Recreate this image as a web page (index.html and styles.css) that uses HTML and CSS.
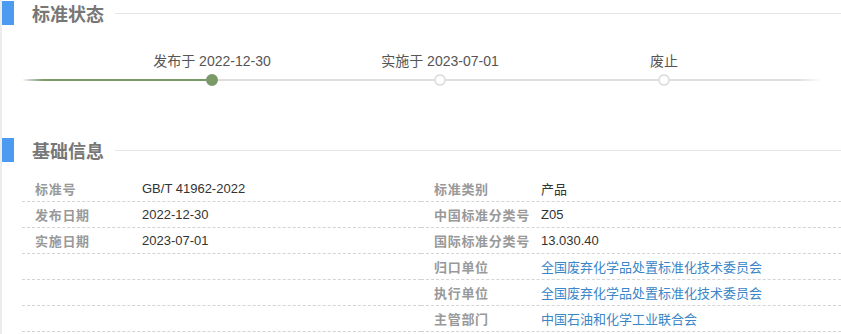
FILE: index.html
```html
<!DOCTYPE html>
<html lang="zh-CN">
<head>
<meta charset="utf-8">
<title>标准信息</title>
<link rel="stylesheet" href="styles.css">
</head>
<body>
<div class="page">
  <div class="section-title">
    <span class="bar"></span>
    <h2 class="title-text">标准状态</h2>
    <span class="title-line"></span>
  </div>

  <div class="timeline">
    <div class="track"></div>
    <div class="track-done"></div>
    <div class="steps">
      <div class="step done s1">
        <div class="step-label">发布于 2022-12-30</div>
        <div class="dot"></div>
      </div>
      <div class="step s2">
        <div class="step-label">实施于 2023-07-01</div>
        <div class="dot"></div>
      </div>
      <div class="step s3">
        <div class="step-label">废止</div>
        <div class="dot"></div>
      </div>
    </div>
  </div>

  <div class="section-title second">
    <span class="bar"></span>
    <h2 class="title-text">基础信息</h2>
    <span class="title-line"></span>
  </div>

  <div class="info">
    <div class="col left">
      <div class="row"><span class="label">标准号</span><span class="value">GB/T 41962-2022</span></div>
      <div class="row"><span class="label">发布日期</span><span class="value">2022-12-30</span></div>
      <div class="row"><span class="label">实施日期</span><span class="value">2023-07-01</span></div>
      <div class="row"></div>
      <div class="row"></div>
      <div class="row"></div>
    </div>
    <div class="col right">
      <div class="row"><span class="label">标准类别</span><span class="value">产品</span></div>
      <div class="row"><span class="label">中国标准分类号</span><span class="value">Z05</span></div>
      <div class="row"><span class="label">国际标准分类号</span><span class="value">13.030.40</span></div>
      <div class="row"><span class="label">归口单位</span><a class="value link" href="#">全国废弃化学品处置标准化技术委员会</a></div>
      <div class="row"><span class="label">执行单位</span><a class="value link" href="#">全国废弃化学品处置标准化技术委员会</a></div>
      <div class="row"><span class="label">主管部门</span><a class="value link" href="#">中国石油和化学工业联合会</a></div>
    </div>
  </div>
</div>
</body>
</html>
```

FILE: styles.css
```css
* { box-sizing: border-box; }
html, body { margin: 0; padding: 0; background: #fff; }
body {
  font-family: "Liberation Sans", "Noto Sans CJK SC", sans-serif;
  color: #333;
}
.page {
  width: 841px;
  height: 334px;
  overflow: hidden;
  border-left: 2px solid #ececec;
  padding-top: 1px;
}
.section-title {
  display: flex;
  align-items: center;
  height: 24px;
}
.section-title.second { margin-top: 52px; }
.bar {
  width: 12px;
  height: 24px;
  background: #4d9bf1;
  flex: none;
}
.title-text {
  margin: 0 0 0 18px;
  font-family: "Noto Sans CJK SC", sans-serif;
  font-size: 18px;
  line-height: 24px;
  font-weight: bold;
  color: #777;
}
.title-line {
  flex: 1;
  height: 1px;
  background: #e6e6e6;
  margin-left: 11px;
}

.timeline {
  position: relative;
  margin: 26px 0 0 20px;
  width: 800px;
}
.track {
  position: absolute;
  left: 0;
  right: 0;
  top: 28px;
  height: 2px;
  background: linear-gradient(to right, rgba(221,221,221,0) 0, #ddd 20px, #ddd 775px, rgba(221,221,221,0) 800px);
}
.track-done {
  position: absolute;
  left: 0;
  top: 28px;
  width: 192px;
  height: 2px;
  background: linear-gradient(to right, rgba(122,154,104,0) 0, #7a9a68 22px, #7a9a68 100%);
}
.steps {
  position: relative;
  display: flex;
  padding-left: 77px;
}
.step {
  display: flex;
  flex-direction: column;
  align-items: center;
}
.step.s1 { width: 226px; }
.step.s2 { width: 230px; }
.step.s3 { width: 218px; }
.step-label {
  font-size: 14px;
  line-height: 20px;
  color: #555;
  white-space: nowrap;
}
.dot {
  margin-top: 3px;
  width: 12px;
  height: 12px;
  border-radius: 50%;
  background: #fff;
  border: 2px solid #e0e0e0;
}
.step.done .dot {
  background: #7a9a68;
  border-color: #7a9a68;
}

.info {
  display: flex;
  margin: 14px 0 0 20px;
}
.col.left { width: 399px; }
.col.right { width: 420px; }
.row {
  display: flex;
  align-items: center;
  height: 26px;
  border-bottom: 1px dashed #d4d4d4;
}
.label {
  width: 120px;
  flex: none;
  padding-left: 13px;
  font-family: "Noto Sans CJK SC", sans-serif;
  font-size: 13px;
  font-weight: bold;
  color: #999;
  letter-spacing: 0.7px;
  white-space: nowrap;
}
.value {
  font-size: 13px;
  color: #333;
  white-space: nowrap;
}
.link {
  color: #3a86c8;
  text-decoration: none;
}
```
